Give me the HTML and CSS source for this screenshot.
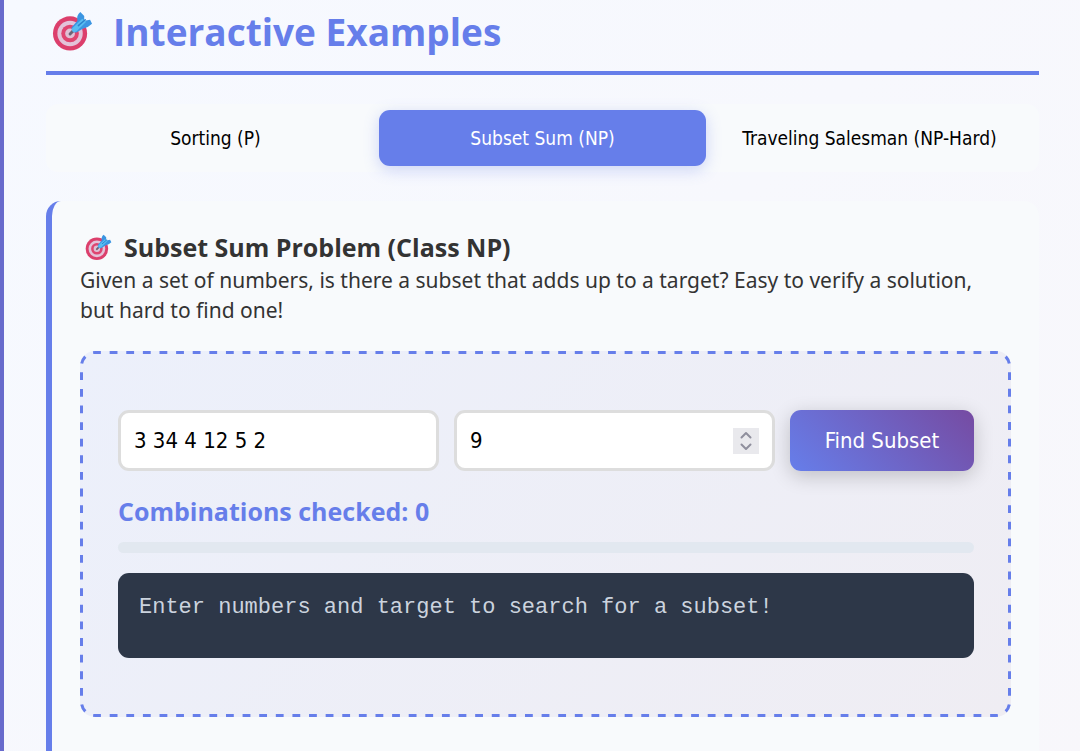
FILE: index.html
```html
<!DOCTYPE html>
<html lang="en">
<head>
<meta charset="utf-8">
<meta name="viewport" content="width=device-width, initial-scale=1">
<title>Interactive Examples</title>
<link rel="stylesheet" href="styles.css">
</head>
<body>
<svg width="0" height="0" class="sprite" aria-hidden="true">
  <symbol id="target" viewBox="0 0 42 42">
    <circle cx="18.500" cy="23" r="17.500" fill="#dc3f6c"/>
    <circle cx="18.500" cy="23" r="13" fill="#e3c3d9"/>
    <circle cx="18.500" cy="23" r="9" fill="#df4570"/>
    <circle cx="18.500" cy="23" r="5" fill="#dfc0d4"/>
    <path d="M18.500 23.500l3-3" stroke="#6d6475" stroke-width="3" stroke-linecap="round"/>
    <path d="M20 17L26 10Q25 4 29 1L33 5 33 10 39 9 41 13Q37 17 32 18L25 22Q20 23 20 17Z" fill="#3b95e2"/>
    <path d="M20.500 18L31 8 35 11 25 21Q20 23 20.500 18Z" fill="#58bdf0"/>
    <path d="M27 15l7-6" stroke="#2b82ce" stroke-width="1.500" stroke-linecap="round"/>
  </symbol>
</svg>
<main class="section">
  <h1 class="section-title"><svg class="title-icon" aria-hidden="true"><use href="#target"/></svg>Interactive Examples</h1>
  <nav class="tabs" aria-label="Examples">
    <button class="tab" type="button">Sorting (P)</button>
    <button class="tab tab-active" type="button" aria-current="true">Subset Sum (NP)</button>
    <button class="tab" type="button">Traveling Salesman (NP-Hard)</button>
  </nav>
  <section class="card">
    <h2 class="card-title"><svg class="card-icon" aria-hidden="true"><use href="#target"/></svg>Subset Sum Problem (Class NP)</h2>
    <p class="description">Given a set of numbers, is there a subset that adds up to a target? Easy to verify a solution, but hard to find one!</p>
    <div class="demo">
      <svg class="dashes" aria-hidden="true"><rect class="dash-line" rx="13.5" pathLength="2618"/></svg>
      <form class="controls">
        <div class="field"><input class="input" type="text" value="3 34 4 12 5 2" aria-label="Numbers"></div>
        <div class="field">
          <input class="input" type="number" value="9" aria-label="Target">
          <span class="stepper" aria-hidden="true"><svg class="stepper-icon" viewBox="0 0 26 26"><path d="M8.500 9.500L13 5l4.500 4.500M8.500 16.500L13 21l4.500-4.500"/></svg></span>
        </div>
        <button class="find" type="button">Find Subset</button>
      </form>
      <div class="counter">Combinations checked: 0</div>
      <div class="progress"></div>
      <output class="result">Enter numbers and target to search for a subset!</output>
    </div>
  </section>
</main>
</body>
</html>
```
FILE: styles.css
```css
* { box-sizing: border-box; }
body {
  margin: 0;
  font-family: "Noto Sans", "Open Sans", sans-serif;
  color: #333;
}
.sprite { display: block; }
.section {
  min-height: 100vh;
  padding: 4px 41px 0 42px;
  border-left: 4px solid #686bcc;
  background: linear-gradient(135deg, #f6f9ff, #f8f7fb);
  overflow: hidden;
}
.section-title {
  display: flex;
  align-items: center;
  gap: 20px;
  height: 71px;
  margin: 0 0 29px;
  padding: 0 0 13px 6px;
  border-bottom: 4px solid #667eea;
  color: #667eea;
  font-family: "Open Sans", sans-serif;
  font-size: 37px;
  font-weight: 700;
}
.title-icon { width: 41px; height: 41px; }
.tabs {
  display: grid;
  grid-template-columns: repeat(3, 1fr);
  margin-bottom: 29px;
  padding: 6px;
  border-radius: 12px;
  background: #f8fafc;
}
.tab {
  height: 56px;
  padding: 0;
  border: 0;
  border-radius: 11px;
  background: transparent;
  color: #000;
  font-family: "DejaVu Sans Condensed", "Noto Sans", sans-serif;
  font-size: 19px;
}
.tab-active {
  background: #667eea;
  box-shadow: 0 4px 15px rgba(102, 126, 234, 0.3);
  color: #fff;
}
.card {
  min-height: 580px;
  padding: 29px 28px;
  border-left: 6px solid #667eea;
  border-radius: 15px;
  background: #f8fafc;
}
.card-title {
  display: flex;
  align-items: center;
  gap: 12px;
  margin: 0;
  padding-left: 5px;
  font-family: "Open Sans", sans-serif;
  font-size: 25px;
  line-height: 35px;
}
.card-icon { width: 27px; height: 27px; }
.description {
  margin: 0 0 26px;
  font-size: 21px;
  line-height: 30px;
}
.demo {
  position: relative;
  padding: 59px 37px 59px 38px;
  border-radius: 15px;
  background: linear-gradient(135deg, #ecf0fb, #efedf3);
}
.dashes {
  position: absolute;
  inset: 0;
  width: 100%;
  height: 100%;
  pointer-events: none;
}
.dash-line {
  x: 1.5px;
  y: 1.5px;
  width: calc(100% - 3px);
  height: calc(100% - 3px);
  fill: none;
  stroke: #667eea;
  stroke-width: 3px;
  stroke-dasharray: 8 9;
  stroke-dashoffset: 2;
}
.controls {
  display: grid;
  grid-template-columns: 1fr 1fr 184px;
  gap: 15px;
}
.field {
  display: flex;
  align-items: center;
  height: 61px;
  padding: 0 13px;
  border: 3px solid #ddd;
  border-radius: 11px;
  background: #fff;
}
.input {
  flex: 1;
  min-width: 0;
  padding: 0;
  border: 0;
  outline: 0;
  background: transparent;
  color: #000;
  font-family: "DejaVu Sans Condensed", "Noto Sans", sans-serif;
  font-size: 22px;
  appearance: textfield;
}
.input::-webkit-inner-spin-button { display: none; }
.stepper {
  width: 26px;
  height: 26px;
  background: #e9e9ed;
}
.stepper-icon {
  display: block;
  fill: none;
  stroke: #8f8f9d;
  stroke-width: 2;
  stroke-linecap: round;
  stroke-linejoin: round;
}
.find {
  height: 61px;
  padding: 0;
  border: 0;
  border-radius: 11px;
  background: linear-gradient(45deg, #667eea, #764ba2);
  box-shadow: 0 5px 20px rgba(0, 0, 0, 0.2);
  color: #fff;
  font-family: "DejaVu Sans Condensed", "Noto Sans", sans-serif;
  font-size: 22px;
}
.counter {
  margin: 22px 0 12px;
  color: #667eea;
  font-family: "Open Sans", sans-serif;
  font-size: 25px;
  font-weight: 700;
  line-height: 37px;
}
.progress {
  height: 11px;
  margin-bottom: 20px;
  border-radius: 6px;
  background: #e2e8f0;
}
.result {
  display: block;
  min-height: 85px;
  padding: 19px 21px;
  border-radius: 11px;
  background: #2d3748;
  color: #cbd3de;
  font-family: "Liberation Mono", monospace;
  font-size: 22px;
  line-height: 32px;
}
```
